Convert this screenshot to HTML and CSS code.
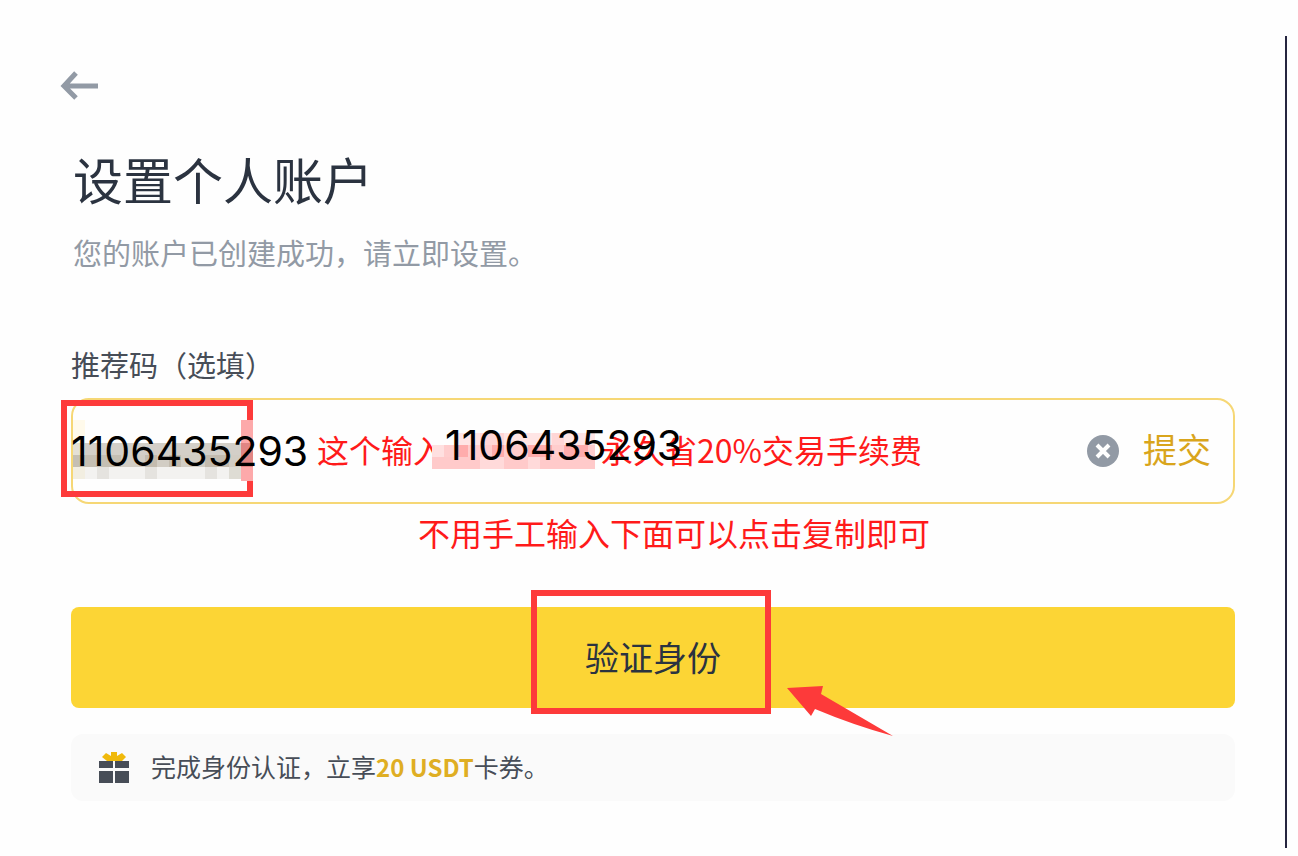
FILE: index.html
```
<!DOCTYPE html>
<html lang="zh-CN">
<head>
    <meta charset="UTF-8">
    <meta name="viewport" content="width=device-width, initial-scale=1.0">
    <title>设置个人账户</title>
    <link rel="stylesheet" href="styles.css">
</head>
<body>
    <main class="panel">
        <button class="back" type="button" aria-label="返回">
            <svg width="40" height="32" viewBox="0 0 40 32" fill="none" stroke="#929aa5" stroke-width="5">
                <path d="M4 16H39M17 3L5 16L17 28"/>
            </svg>
        </button>
        <h1>设置个人账户</h1>
        <p class="subtitle">您的账户已创建成功，请立即设置。</p>

        <form>
            <label for="code">推荐码（选填）</label>
            <div class="field">
                <!-- Pixelated old code and red frame -->
                <svg class="code-mark" width="194" height="100" viewBox="0 0 194 100" shape-rendering="crispEdges">
                    <rect x="3" y="5" width="186" height="91" fill="none" stroke="#fd3a3a" stroke-width="6"/>
                    <path fill="#fffaeb" d="M12 22h12v23H12z"/>
                    <path fill="#e4e0d5" d="M12 45h12v12H12z"/>
                    <path fill="#d3cfc8" d="M24 45h156v12H24z"/>
                    <path fill="#c5bfb3" d="M12 57h48v12H12z"/>
                    <path fill="#d2cdc4" d="M60 57h120v12H60z"/>
                    <path fill="#c3bbae" d="M84 57h12v12H84zM108 57h12v12h-12zM144 57h24v12h-24z"/>
                    <path fill="#f3f2f0" d="M24 69h156v12H24z"/>
                    <path fill="#f2eee1" d="M12 69h12v12H12z"/>
                    <path fill="#e5e3df" d="M36 69h12v12H36zM84 69h12v12H84zM144 69h12v12h-12z"/>
                    <path fill="#dedcd4" d="M168 69h12v12h-12z"/>
                    <path fill="#fda9aa" d="M180 22h12v61h-12z"/>
                    <path fill="#e18583" d="M180 45h12v24h-12z"/>
                </svg>
                <input class="code" id="code" type="text" value="1106435293">
                <span class="tip">这个输入</span>
                <svg class="pixels" width="163" height="36" viewBox="0 0 163 36" shape-rendering="crispEdges">
                    <path fill="#ffe5e5" d="M24 0h139v12H24z"/>
                    <path fill="#ffd6d6" d="M48 0h24v12H48zM120 0h12v12h-12z"/>
                    <path fill="#ffcdcd" d="M0 12h163v12H0z"/>
                    <path fill="#ffe0e0" d="M0 12h12v12H0z"/>
                    <path fill="#ffacac" d="M24 12h12v12H24zM60 12h12v12H60zM96 12h24v12H96zM132 12h24v12h-24z"/>
                    <path fill="#ffcaca" d="M0 24h163v12H0z"/>
                    <path fill="#ffdada" d="M48 24h24v12H48zM96 24h12v12H96z"/>
                </svg>
                <span class="tip">永久省20%交易手续费</span>
                <span class="new-code">1106435293</span>
                <button class="clear" type="button" aria-label="清除">
                    <svg width="32" height="32" viewBox="0 0 32 32">
                        <circle cx="16" cy="16" r="16" fill="#929aa5"/>
                        <path d="M10 10L22 22M22 10L10 22" stroke="#fff" stroke-width="4"/>
                    </svg>
                </button>
                <button class="submit" type="submit">提交</button>
            </div>
            <p class="note">不用手工输入下面可以点击复制即可</p>

            <div class="verify-wrap">
                <button class="verify" type="button">验证身份</button>
                <svg class="verify-mark" width="364" height="148" viewBox="0 0 364 148">
                    <rect x="3" y="4" width="234" height="118" fill="none" stroke="#fd3a3a" stroke-width="6"/>
                    <path d="M256 99L292 97L290 105L362 147Q322 136 284 120L280 127Z" fill="#fd3a3a"/>
                </svg>
            </div>
        </form>

        <div class="notice">
            <svg width="30" height="32" viewBox="0 0 30 32">
                <path d="M0 9h14v7H0zM16 9h14v7H16zM0 19h14v12H0zM16 19h14v12H16z" fill="#474d57"/>
                <path d="M12 0h6v4l5-3 4 4-4 4H8L3 5l4-4 5 3z" fill="#f0b90b"/>
            </svg>
            <p>完成身份认证，立享<strong>20 USDT</strong>卡券。</p>
        </div>
    </main>
</body>
</html>
```
FILE: styles.css
```
/* General styles */
* {
    box-sizing: border-box;
}
body {
    margin: 0;
    padding: 36px 11px 8px 0;
    min-height: 100vh;
    display: flex;
    background-color: #fefefe;
    color: #2b3340;
    font-family: "Noto Sans CJK SC", sans-serif;
}
h1, p {
    margin: 0;
    font-weight: 400;
}
button {
    border: none;
    padding: 0;
    background: none;
    font-family: inherit;
    cursor: pointer;
}
svg {
    display: block;
    flex-shrink: 0;
}
.panel {
    flex: 1;
    padding: 34px 50px 40px 71px;
    border-right: 2px solid #25253f;
}
/* Heading */
.back {
    display: block;
    margin-left: -12px;
}
h1 {
    margin-top: 46px;
    padding-left: 2px;
    font-size: 50px;
    line-height: 60px;
}
.subtitle {
    margin-top: 24px;
    padding-left: 2px;
    font-size: 29px;
    line-height: 40px;
    color: #929aa5;
}
/* Referral code */
label {
    display: block;
    margin-top: 72px;
    font-size: 29px;
    line-height: 40px;
    color: #474d57;
}
.field {
    position: relative;
    display: flex;
    align-items: center;
    height: 106px;
    margin-top: 14px;
    padding-right: 22px;
    border: 2px solid #f6d775;
    border-radius: 18px;
}
.code-mark {
    position: absolute;
    left: -12px;
    top: -2px;
}
.code {
    position: relative;
    width: 246px;
    margin-left: -2px;
    padding: 0;
    border: none;
    outline: none;
    background: transparent;
    font-family: Inter, sans-serif;
    font-size: 41px;
    color: #000;
}
.tip, .note {
    font-size: 32px;
    line-height: 40px;
    color: #ff1a1a;
    white-space: nowrap;
}
.tip, .submit {
    padding-bottom: 4px;
}
.pixels {
    position: relative;
    margin-left: -13px;
    margin-right: 6px;
}
.new-code {
    position: absolute;
    left: 372px;
    top: 20px;
    font-family: Inter, sans-serif;
    font-size: 41px;
    line-height: 50px;
    color: #000;
}
.clear {
    margin-left: auto;
}
.submit {
    margin-left: 24px;
    font-size: 34px;
    line-height: 40px;
    color: #d9a51c;
    white-space: nowrap;
}
.note {
    margin-top: 8px;
    padding-left: 42px;
    text-align: center;
}
/* Verify button */
.verify-wrap {
    position: relative;
    margin-top: 55px;
}
.verify {
    display: block;
    width: 100%;
    height: 101px;
    padding-bottom: 2px;
    border-radius: 8px;
    background-color: #fcd535;
    font-size: 34px;
    color: #2b3340;
}
.verify-mark {
    position: absolute;
    left: calc(50% - 122px);
    top: -18px;
    pointer-events: none;
}
/* Notice */
.notice {
    display: flex;
    align-items: center;
    gap: 22px;
    margin-top: 26px;
    padding: 0 28px;
    height: 67px;
    border-radius: 12px;
    background-color: #fafafa;
    font-size: 25px;
    color: #474d57;
}
.notice p {
    padding-bottom: 4px;
}
.notice strong {
    font-size: 24px;
    font-weight: 700;
    color: #dfae23;
}
```
